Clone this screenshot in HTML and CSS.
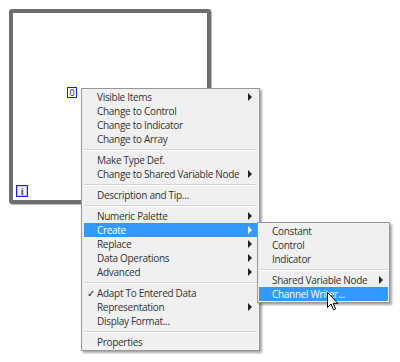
FILE: index.html
```html
<!DOCTYPE html>
<html lang="en">
<head>
    <meta charset="UTF-8" />
    <title>Numeric constant - shortcut menu</title>
    <link rel="stylesheet" href="styles.css">
</head>
<body>
    <div class="canvas">
        <div class="loop">
            <span class="node node-zero">0</span>
            <span class="node node-i">i</span>
        </div>

        <!-- Menu contestuale principale -->
        <ul class="menu main-menu">
            <li class="item has-sub">Visible Items</li>
            <li class="item">Change to Control</li>
            <li class="item">Change to Indicator</li>
            <li class="item">Change to Array</li>
            <li class="sep"></li>
            <li class="item">Make Type Def.</li>
            <li class="item has-sub">Change to Shared Variable Node</li>
            <li class="sep"></li>
            <li class="item">Description and Tip...</li>
            <li class="sep"></li>
            <li class="item has-sub">Numeric Palette</li>
            <li class="item has-sub active">Create</li>
            <li class="item has-sub">Replace</li>
            <li class="item has-sub">Data Operations</li>
            <li class="item has-sub">Advanced</li>
            <li class="sep"></li>
            <li class="item checked">Adapt To Entered Data</li>
            <li class="item has-sub">Representation</li>
            <li class="item">Display Format...</li>
            <li class="sep"></li>
            <li class="item">Properties</li>
        </ul>

        <!-- Sottomenu Create -->
        <ul class="menu sub-menu">
            <li class="item">Constant</li>
            <li class="item">Control</li>
            <li class="item">Indicator</li>
            <li class="sep"></li>
            <li class="item has-sub">Shared Variable Node</li>
            <li class="item active">Channel Writer...</li>
        </ul>

        <svg class="cursor" width="12" height="19" viewBox="0 0 12 19">
            <path d="M0.5 0.5 L0.5 15.5 L4 12 L6.5 17.8 L8.6 16.9 L6.2 11.3 L10.8 11.3 Z" fill="#fff" stroke="#000" stroke-width="1" stroke-linejoin="round"/>
        </svg>
    </div>
</body>
</html>
```

FILE: styles.css
```css
body {
    margin: 0;
    background-color: #ffffff;
    font-family: "Open Sans", "Noto Sans", sans-serif;
}

.canvas {
    position: relative;
    width: 400px;
    height: 362px;
    overflow: hidden;
    padding: 9px 0 0 9px;
    box-sizing: border-box;
}

.loop {
    position: relative;
    width: 202px;
    height: 195px;
    box-sizing: border-box;
    border: 4px solid #6e6e6e;
    border-radius: 3px;
    box-shadow: 1px 1px 1px #b5b5b5;
}

.node {
    position: absolute;
    box-sizing: border-box;
    border: 1px solid #1a1aff;
    font-size: 9px;
    line-height: 1;
    display: flex;
    align-items: center;
    justify-content: center;
}

.node-zero {
    left: 54px;
    top: 74px;
    width: 10px;
    height: 11px;
    background-color: #fff;
    color: #222;
}

.node-i {
    left: 3px;
    top: 172px;
    width: 12px;
    height: 12px;
    background-color: #fffbd6;
    color: #1a1aff;
    box-shadow: inset 0 0 0 1px #c9c9ff;
    font-weight: bold;
}

.menu {
    position: absolute;
    list-style: none;
    margin: 0;
    padding: 1px 2px;
    background-color: #f0f0f0;
    border: 1px solid #979797;
    box-shadow: 2px 2px 2px rgba(0, 0, 0, 0.35);
    font-size: 10px;
    letter-spacing: -0.3px;
    color: #333333;
}

.main-menu {
    left: 81px;
    top: 88px;
    width: 173px;
}

.sub-menu {
    left: 257px;
    top: 222px;
    width: 129px;
    padding: 1px;
}

.item {
    position: relative;
    height: 14px;
    line-height: 14px;
    padding-left: 13px;
    white-space: nowrap;
}

.sub-menu .item {
    padding-left: 13px;
}

.item.has-sub::after {
    content: "";
    position: absolute;
    right: 5px;
    top: 3px;
    border-left: 4px solid #222;
    border-top: 4px solid transparent;
    border-bottom: 4px solid transparent;
}

.item.active {
    background-color: #3399ff;
    color: #ffffff;
}

.item.active::after {
    border-left-color: #ffffff;
}

.item.checked::before {
    content: "\2713";
    position: absolute;
    left: 3px;
    top: 0;
    font-size: 10px;
    color: #222;
}

.sep {
    height: 7px;
    position: relative;
}

.sep::before {
    content: "";
    position: absolute;
    left: 0;
    right: 0;
    top: 3px;
    border-top: 1px solid #d5d5d5;
    border-bottom: 1px solid #ffffff;
}

.cursor {
    position: absolute;
    left: 327px;
    top: 292px;
}
```
